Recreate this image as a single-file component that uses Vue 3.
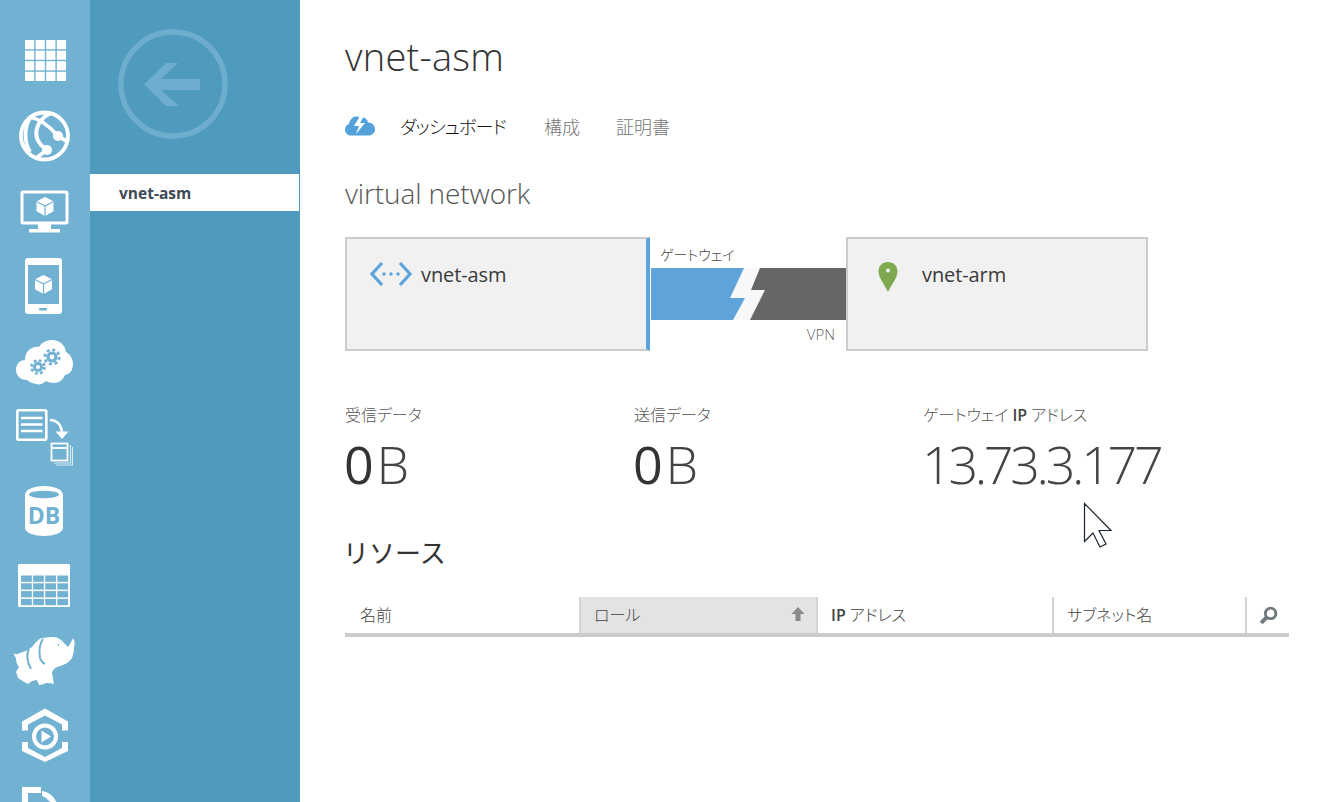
<script setup>
const gridCells = []
for (let r = 0; r < 4; r++) for (let c = 0; c < 4; c++) gridCells.push({ x: 25 + c * 10.6, y: 17 + r * 10.6 })
const tableCells = []
for (let r = 0; r < 4; r++) for (let c = 0; c < 4; c++) tableCells.push({ x: 21 + c * 12.1, y: 27.5 + r * 7.8 })
const columns = [
  { label: '名前' },
  { label: 'ロール', sorted: true },
  { ip: 'IP', label: ' アドレス' },
  { label: 'サブネット名' }
]
const stats = [
  { label: '受信データ', num: '0', unit: 'B' },
  { label: '送信データ', num: '0', unit: 'B' },
  { label: 'ゲートウェイ ', ip: 'IP', post: ' アドレス', plain: '13.73.3.177' }
]
</script>

<template>
  <div class="page">
    <nav class="rail">
      <svg class="ic" viewBox="0 0 90 75"><rect v-for="(c, i) in gridCells" :key="i" :x="c.x" :y="c.y" width="9.2" height="9.2" fill="#fff" /></svg>
      <svg class="ic" viewBox="0 0 90 75">
        <g fill="none" stroke="#fff">
          <circle cx="44.500" cy="38" r="23.500" stroke-width="3.800" />
          <path d="M51 15 C36 22 29 40 47 52 M30 19 C42 21 51 30 58 38 M58 38 L68 44 M47 52 L36 60 M30 20 C24 30 24 44 30 54" stroke-width="3.800" />
        </g>
        <circle cx="58" cy="38" r="5" fill="#fff" /><circle cx="47" cy="52" r="5" fill="#fff" />
      </svg>
      <svg class="ic" viewBox="0 0 90 75">
        <rect x="22" y="19" width="45" height="31" rx="1" fill="none" stroke="#fff" stroke-width="3" />
        <path d="M38 50h13v6h-13zM29 56h31v3.400H29z" fill="#fff" />
        <path d="M45 24l8.500 4.200v10L45 43l-8.500-4.800v-10z" fill="#fff" />
        <path d="M36.500 28.500L45 33l8.500-4.500M45 33v10" fill="none" stroke="#71b1d2" stroke-width="1.200" />
      </svg>
      <svg class="ic" viewBox="0 0 90 75">
        <rect x="25" y="10" width="37" height="56" rx="3" fill="#fff" />
        <rect x="28" y="17" width="31" height="39" fill="#71b1d2" />
        <rect x="39" y="60" width="8" height="2.500" rx="1" fill="#71b1d2" />
        <path d="M43.500 27l8.500 4.200v10l-8.500 4.800-8.500-4.800v-10z" fill="#fff" />
        <path d="M35 31.500l8.500 4.500 8.500-4.500M43.500 36v10" fill="none" stroke="#71b1d2" stroke-width="1.200" />
      </svg>
      <svg class="ic" viewBox="0 0 90 75">
        <path d="M27 57c-7 0-11-5-11-10 0-6 4-10 9-10 0-9 7-14 14-13 3-5 8-7 13-7 8 0 13 5 14 12 4 2 7 7 7 12 0 6-3 10-8 11-2 5-6 8-11 8-3 0-6-1-8-2-3 3-7 4-10 3-4-1-7-2-9-4z" fill="#fff" />
        <g fill="none" stroke="#71b1d2">
          <circle cx="38" cy="44" r="3.600" stroke-width="3" />
          <circle cx="38" cy="44" r="6.500" stroke-width="2.600" stroke-dasharray="2.800 2.300" />
          <circle cx="52" cy="34" r="4" stroke-width="3.200" />
          <circle cx="52" cy="34" r="7.200" stroke-width="2.800" stroke-dasharray="3 2.650" />
        </g>
      </svg>
      <svg class="ic" viewBox="0 0 90 75">
        <rect x="17.300" y="12.300" width="29" height="29.500" rx="1.500" fill="none" stroke="#fff" stroke-width="2.600" />
        <path d="M21 20h21.500M21 26.500h21.500M21 33h21.500" stroke="#fff" stroke-width="2.400" />
        <path d="M50 22c6 0 11 4 12 12" fill="none" stroke="#fff" stroke-width="2.600" />
        <path d="M55.500 33.500h13l-6.500 7.500z" fill="#fff" />
        <g fill="none" stroke="#fff" opacity=".75" stroke-width="1.100">
          <path d="M72.500 49v18H56M70.500 47v18H54" />
        </g>
        <rect x="51.500" y="45.500" width="16" height="17" fill="none" stroke="#fff" stroke-width="1.800" />
        <path d="M52 50h15" stroke="#fff" stroke-width="1.800" />
      </svg>
      <svg class="ic" viewBox="0 0 90 75">
        <path d="M25 22c0-6 10-9 19-9s19 3 19 9v33c0 5-10 8-19 8s-19-3-19-8z" fill="#fff" />
        <ellipse cx="44" cy="21.500" rx="15" ry="3.800" fill="#71b1d2" />
        <text x="44" y="50.500" text-anchor="middle" class="db">DB</text>
      </svg>
      <svg class="ic" viewBox="0 0 90 75">
        <rect x="18" y="16" width="52" height="43" rx="1.500" fill="#fff" />
        <rect v-for="(c, i) in tableCells" :key="i" :x="c.x" :y="c.y" width="10.800" height="6.300" fill="#71b1d2" />
      </svg>
      <svg class="ic" viewBox="0 0 90 75">
        <path d="M14 30c2 2 4 1 6 0 4-1 8-3 12-6 4-5 7-9 11-9 4-1 8-1 10-1 4 0 8 2 10 5 2 2 4 4 5 5 2-3 4-6 5-9 2 3 2 6 1 9 0 5-1 8-2 11-3 4-6 6-9 7-3 1-6 2-8 3-2 2-3 4-3 5l2 11c-3-1-5-1-8-1-2 1-5 2-7 2l-2-5c-2 0-4 1-5 1l-4 3c-4-2-7-4-10-6l-2-6 3-5c-2-2-3-5-3-9-1-1-2-3-2-5z" fill="#fff" />
        <path d="M29 26c-3 5-2 13 2 20M43 16c-4 6-4 13-3 19 1 3 3 5 5 6M58 22l1 0" fill="none" stroke="#71b1d2" stroke-width="2" />
      </svg>
      <svg class="ic" viewBox="0 0 90 75">
        <path d="M22 23.500l23-13 23 13v9h-6v-6l-17-9-17 9v6h-6zM22 44h6v6l17 9 17-9v-6h6v9L45 64 22 53z" fill="#fff" />
        <circle cx="45" cy="38.500" r="11" fill="none" stroke="#fff" stroke-width="4" />
        <path d="M41.500 32.500l9.500 6-9.500 6z" fill="#fff" />
      </svg>
      <svg class="ic" viewBox="0 0 90 75">
        <path d="M22 14h19v6h-13v19h-6zM42 18c8 1 14 7 16 16h-5c-2-5-6-9-11-11z" fill="#fff" />
      </svg>
    </nav>

    <aside class="sidebar">
      <svg class="back" width="210" height="174" viewBox="0 0 210 174">
        <circle cx="83" cy="84" r="52" fill="none" stroke="#6eadcd" stroke-width="5.500" />
        <path d="M54 84.500L76 63h12L71 79h39v11H71l18 16H76z" fill="#6eadcd" />
      </svg>
      <div class="nav-item">vnet-asm</div>
    </aside>

    <main class="main">
      <h1 class="title">vnet-asm</h1>

      <div class="tabs">
        <svg class="tab-icon" width="30" height="20" viewBox="0 0 30 20">
          <path d="M6 19.500c-3.500 0-6-2.500-6-6 0-3 2-5 4-5.500C5 3 8 .5 11.500.5c1.500 0 3 .5 4 1.500 1-.5 2-1 3-.5 2.500.5 4 2.500 4.500 5 3.500 0 7 2.500 7 6.500s-3 6.500-6.500 6.500z" fill="#54a2dc" />
          <path d="M15 0l-6 10h5l-3 8 9-11h-5l4-7z" fill="#fff" />
        </svg>
        <span class="tab active">ダッシュボード</span>
        <span class="tab">構成</span>
        <span class="tab">証明書</span>
      </div>

      <h2 class="subtitle">virtual network</h2>

      <section class="diagram">
        <div class="box box-left">
          <svg width="42" height="26" viewBox="0 0 42 26">
            <path d="M12 2L2 13l10 11M30 2l10 11-10 11" fill="none" stroke="#5ea4da" stroke-width="3.200" />
            <circle cx="14" cy="13" r="1.700" fill="#5ea4da" /><circle cx="21" cy="13" r="1.700" fill="#5ea4da" /><circle cx="28" cy="13" r="1.700" fill="#5ea4da" />
          </svg>
          <span class="box-name">vnet-asm</span>
        </div>
        <div class="gateway">
          <div class="gw-top">ゲートウェイ</div>
          <svg class="gw-bar" width="195" height="52" viewBox="0 0 195 52">
            <rect width="100" height="52" fill="#5ea4da" />
            <rect x="95" width="100" height="52" fill="#666" />
            <path d="M93 0h16l-9 22h14l-15 30H82l12-22H79z" fill="#f6f8fa" />
          </svg>
          <div class="gw-bottom">VPN</div>
        </div>
        <div class="box box-right">
          <svg class="pin" width="22" height="32" viewBox="0 0 22 32">
            <path d="M11 1c5.500 0 9.500 4 9.500 9.500 0 6-6 13-9.500 20.500C7.500 23.500 1.500 16.500 1.500 10.500 1.500 5 5.500 1 11 1z" fill="#7fa94f" />
            <circle cx="11" cy="9.500" r="2" fill="#f1f1f1" />
          </svg>
          <span class="box-name">vnet-arm</span>
        </div>
      </section>

      <section class="stats">
        <div v-for="s in stats" :key="s.label" class="stat">
          <div class="stat-label">{{ s.label }}<b v-if="s.ip" class="ip">{{ s.ip }}</b>{{ s.post }}</div>
          <div v-if="s.plain" class="stat-value thin">{{ s.plain }}</div>
          <div v-else class="stat-value"><span class="num">{{ s.num }}</span><span class="thin unit">{{ s.unit }}</span></div>
        </div>
      </section>

      <h3 class="res-title">リソース</h3>

      <div class="thead">
        <div v-for="c in columns" :key="c.label" class="th" :class="{ sorted: c.sorted }">
          <span><b v-if="c.ip" class="ip">{{ c.ip }}</b>{{ c.label }}</span>
          <svg v-if="c.sorted" width="14" height="16" viewBox="0 0 14 16"><path d="M7 1l6.500 7H9.500v7h-5V8H.5z" fill="#8a8a8a" /></svg>
        </div>
        <div class="th search">
          <svg width="21" height="21" viewBox="0 0 20 20">
            <circle cx="12" cy="8" r="5" fill="none" stroke="#6f7a80" stroke-width="2.800" />
            <path d="M8.500 11.500L3 17" stroke="#6f7a80" stroke-width="3.800" />
          </svg>
        </div>
      </div>

      <svg class="cursor" width="32" height="46" viewBox="0 0 32 46">
        <path d="M1.500 1.500v38l8.500-8.500 7 14 6-3-7-13.500h12z" fill="#fff" stroke="#1b2530" stroke-width="1.200" />
      </svg>
    </main>
  </div>
</template>

<style>
html, body { margin: 0; background: #fff; overflow: hidden; }
</style>

<style scoped>
.page {
  display: flex;
  width: 1330px;
  height: 802px;
  overflow: hidden;
  font-family: "Open Sans", "Noto Sans CJK JP", sans-serif;
  font-feature-settings: "palt";
  color: #333;
  background: #fff;
}
.rail {
  flex: none;
  width: 90px;
  height: 802px;
  padding-top: 23px;
  box-sizing: border-box;
  background: #71b1d2;
  display: flex;
  flex-direction: column;
  overflow: hidden;
}
.ic { display: block; flex: none; width: 90px; height: 75px; }
.db { font: 700 23px "Open Sans", sans-serif; fill: #71b1d2; }
.sidebar { flex: none; width: 210px; background: #4f9bbe; }
.back { display: block; }
.nav-item {
  height: 37px;
  margin-right: 1px;
  background: #fff;
  padding-left: 29px;
  font-size: 15.5px;
  font-weight: 700;
  line-height: 39px;
  color: #3f4a54;
}
.main { position: relative; flex: 1; min-width: 0; padding: 0 41px 0 45px; }
.title {
  margin: 0;
  padding-top: 32px;
  height: 48px;
  font-size: 38px;
  line-height: 48px;
  font-weight: 300;
  letter-spacing: .25px;
  color: #333;
}
.tabs { display: flex; align-items: center; margin-top: 23px; height: 46px; }
.tab-icon { margin-right: 25px; }
.tab { margin-right: 36px; font-size: 18px; font-weight: 300; color: #777; }
.tab.active { color: #111; letter-spacing: -.85px; margin-right: 38px; }
.subtitle {
  margin: 24px 0 0;
  height: 40px;
  font-size: 28px;
  line-height: 40px;
  font-weight: 300;
  color: #555;
  letter-spacing: -.1px;
}
.diagram { display: flex; margin-top: 24px; height: 114px; width: 803px; }
.box {
  box-sizing: border-box;
  height: 114px;
  background: #f1f1f1;
  border: 2px solid #ccc;
  display: flex;
  align-items: flex-start;
}
.box-left { width: 305px; margin-right: 1px; border-right: 4px solid #5ea4da; padding: 22px 0 0 23px; gap: 9px; }
.box-right { width: 302px; padding: 22px 0 0 29px; gap: 23px; }
.box-name { font-size: 20px; line-height: 28px; color: #3a3a3a; letter-spacing: -.1px; font-weight: 400; }
.gateway { width: 195px; display: flex; flex-direction: column; }
.gw-top { height: 31px; padding-left: 9px; font-size: 14px; line-height: 35px; font-weight: 300; color: #444; }
.gw-bar { display: block; }
.gw-bottom { text-align: right; padding-right: 11px; font-size: 15px; line-height: 28px; color: #666; font-weight: 300; }
.stats { display: grid; grid-template-columns: 289px 289px 1fr; margin-top: 52px; }
.stat-label { font-size: 16px; line-height: 24px; font-weight: 300; color: #555; }
.ip { font-weight: 600; color: #444; }
.stat-value { margin-left: -1px; padding-top: 5px; font-size: 52px; line-height: 64px; letter-spacing: -3.3px; color: #333; }
.num { font-weight: 400; }
.unit { margin-left: 6px; }
.thin { font-weight: 300; color: #444; }
.res-title {
  margin: 35px 0 0 -2px;
  font-size: 26px;
  font-feature-settings: normal;
  line-height: 44px;
  font-weight: 400;
  color: #333;
  height: 44px;
}
.thead {
  display: grid;
  grid-template-columns: 234px 237px 236px 193px 44px;
  margin-top: 22px;
  height: 40px;
  box-sizing: border-box;
  border-bottom: 4px solid #ccc;
}
.th {
  box-sizing: border-box;
  display: flex;
  align-items: center;
  justify-content: space-between;
  border-left: 2px solid #d4d4d4;
  padding: 0 11px 2px 13px;
  font-size: 16px;
  font-weight: 300;
  color: #444;
}
.th:first-child { border-left: 0; padding-left: 15px; }
.th.sorted { background: #e3e3e3; }
.th.search { padding: 0 0 0 11px; }
.cursor { position: absolute; left: 783px; top: 502px; }
</style>
